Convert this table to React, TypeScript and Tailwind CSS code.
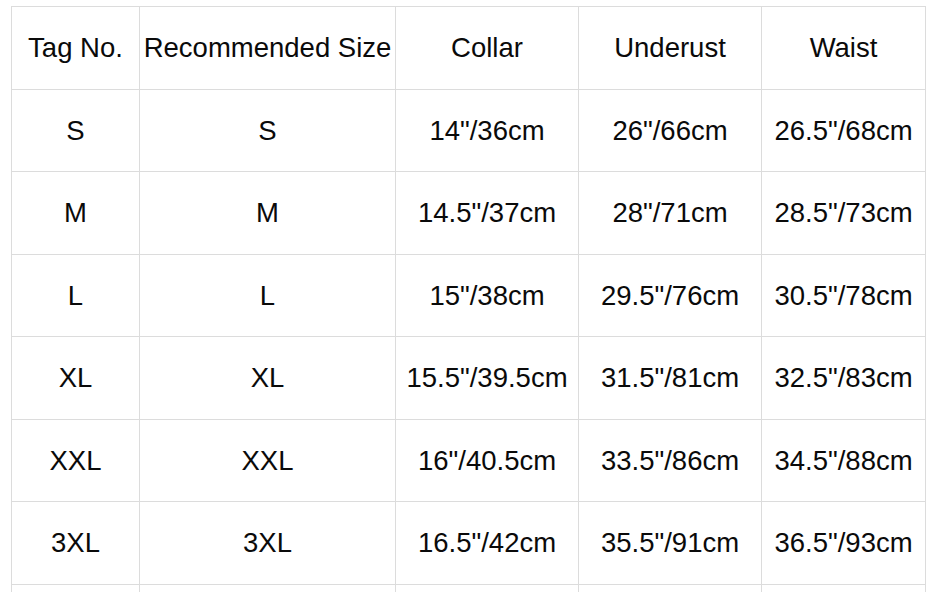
const headers = ["Tag No.", "Recommended Size", "Collar", "Underust", "Waist"];

const rows = [
  ["S", "S", "14\"/36cm", "26\"/66cm", "26.5\"/68cm"],
  ["M", "M", "14.5\"/37cm", "28\"/71cm", "28.5\"/73cm"],
  ["L", "L", "15\"/38cm", "29.5\"/76cm", "30.5\"/78cm"],
  ["XL", "XL", "15.5\"/39.5cm", "31.5\"/81cm", "32.5\"/83cm"],
  ["XXL", "XXL", "16\"/40.5cm", "33.5\"/86cm", "34.5\"/88cm"],
  ["3XL", "3XL", "16.5\"/42cm", "35.5\"/91cm", "36.5\"/93cm"],
  ["", "", "", "", ""],
];

const widths = ["w-[128px]", "w-[256px]", "w-[183px]", "w-[183px]", "w-[164px]"];

export default function App() {
  return (
    <div className="w-[942px] h-[592px] overflow-hidden bg-white pl-[11px] pt-[6px]">
      <table
        className="table-fixed border-collapse text-[27.5px] text-[#0a0a0a]"
        style={{ fontFamily: '"Liberation Sans", Arial, sans-serif' }}
      >
        <colgroup>
          {widths.map((w, i) => (
            <col key={i} className={w} />
          ))}
        </colgroup>
        <thead>
          <tr className="h-[83px]">
            {headers.map((h) => (
              <th key={h} className="border border-[#dcdcdc] p-0 text-center font-normal whitespace-nowrap">
                {h}
              </th>
            ))}
          </tr>
        </thead>
        <tbody>
          {rows.map((r, i) => (
            <tr key={i} className={i % 2 === 0 ? "h-[82px]" : "h-[83px]"}>
              {r.map((c, j) => (
                <td key={j} className="border border-[#dcdcdc] p-0 text-center whitespace-nowrap">
                  {c}
                </td>
              ))}
            </tr>
          ))}
        </tbody>
      </table>
    </div>
  );
}
